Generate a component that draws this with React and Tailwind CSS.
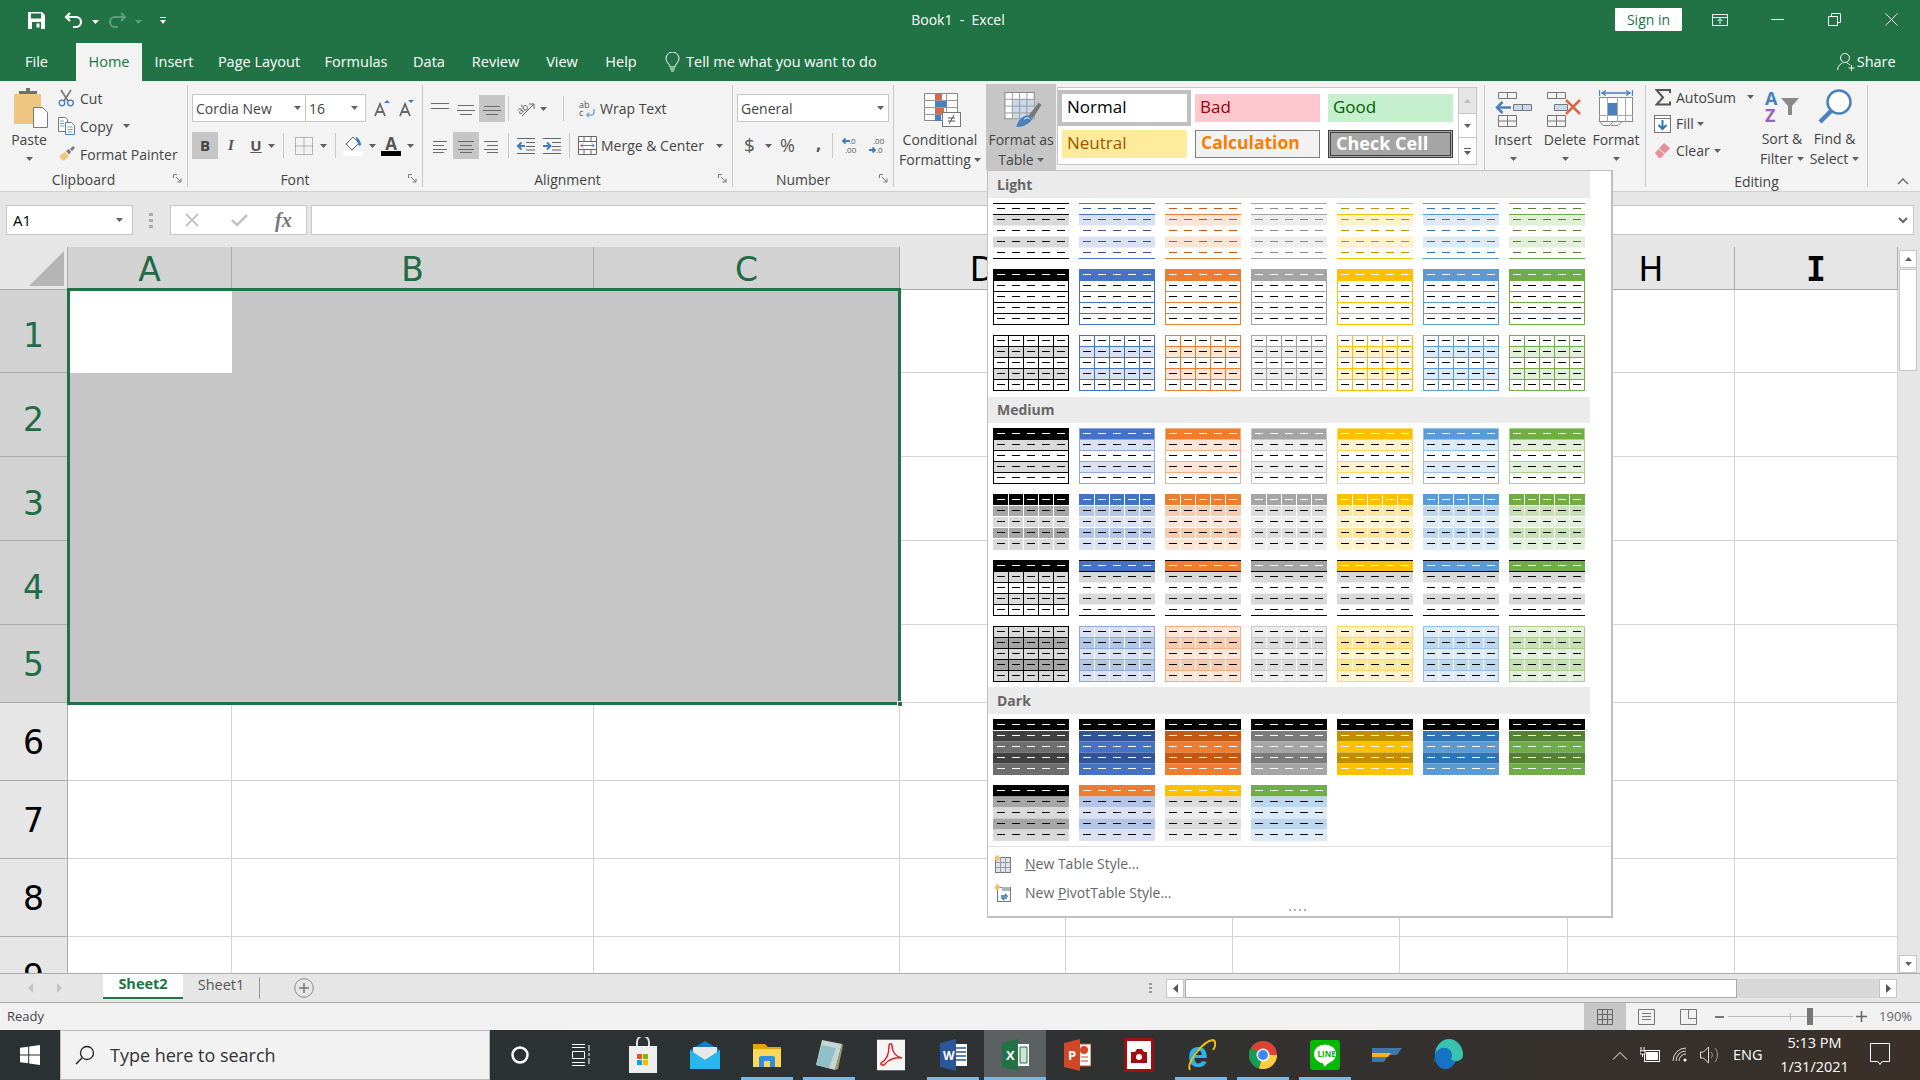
import React from "react";

const C = {
  black: { a: "#000000", t1: "#d9d9d9", t2: "#a6a6a6", t3: "#000000", d: "#000000", dk: "#404040", c: "#6e6e6e" },
  blue: { a: "#4472c4", t1: "#dae1f3", t2: "#b4c6e7", t3: "#8ea9db", d: "#305496", dk: "#305496", c: "#4472c4" },
  orange: { a: "#ed7d31", t1: "#fce4d6", t2: "#f8cbad", t3: "#f4b084", d: "#c65911", dk: "#c65911", c: "#ed7d31" },
  gray: { a: "#a5a5a5", t1: "#ededed", t2: "#dbdbdb", t3: "#c9c9c9", d: "#8a8a8a", dk: "#7b7b7b", c: "#a5a5a5" },
  yellow: { a: "#ffc000", t1: "#fff2cc", t2: "#ffe699", t3: "#ffd966", d: "#bf8f00", dk: "#bf8f00", c: "#ffc000" },
  ltblue: { a: "#5b9bd5", t1: "#ddebf7", t2: "#bdd7ee", t3: "#9bc2e6", d: "#2f75b5", dk: "#2f75b5", c: "#5b9bd5" },
  green: { a: "#70ad47", t1: "#e2efda", t2: "#c6e0b4", t3: "#a9d08e", d: "#548235", dk: "#548235", c: "#70ad47" },
};
const ORDER = ["black", "blue", "orange", "gray", "yellow", "ltblue", "green"];
const YS = [0, 11.5, 22.5, 33.5, 44.5, 56];
const W = "#ffffff";
const K = "#000000";

function Thumb({ bands, outer, h = [], hc, v, dash }) {
  return (
    <svg width="76" height="56" viewBox="0 0 76 56" className="block">
      {bands.map((b, i) => b && <rect key={i} x="0" y={YS[i]} width="76" height={YS[i + 1] - YS[i]} fill={b} />)}
      {v && [15.5, 30.5, 45.5, 60.5].map((x) => <line key={x} x1={x} x2={x} y1="0" y2="56" stroke={v} strokeWidth="1" />)}
      {h.map((y) => <line key={y} x1="0" x2="76" y1={y} y2={y} stroke={hc} strokeWidth="1" />)}
      {outer && <rect x="0.5" y="0.5" width="75" height="55" fill="none" stroke={outer} strokeWidth="1" />}
      {[5.5, 16.5, 27.5, 38.5, 49.5].map((y, i) =>
        [4, 19, 34, 49, 64].map((x) => <line key={x} x1={x} x2={x + 8} y1={y} y2={y} stroke={dash[i]} strokeWidth="1" />)
      )}
    </svg>
  );
}

const HL = [11.5, 22.5, 33.5, 44.5];
const first = (x) => [x, K, K, K, K];
const all = (x) => [x, x, x, x, x];
const LIGHT = [
  ORDER.map((n) => { const c = C[n]; return { bands: [null, c.t1, null, c.t1, null], h: [0.5, 11.5, 55.5], hc: c.a, dash: all(c.d) }; }),
  ORDER.map((n) => { const c = C[n]; return { bands: [c.a, null, null, null, null], outer: c.a, h: HL, hc: c.a, dash: first(W) }; }),
  ORDER.map((n) => { const c = C[n]; return { bands: [null, c.t1, null, c.t1, null], outer: c.a, h: HL, hc: c.a, v: c.a, dash: all(K) }; }),
];
const MEDIUM = [
  ORDER.map((n) => { const c = C[n]; return { bands: [c.a, c.t1, null, c.t1, null], outer: c.t3, h: HL, hc: c.t3, dash: first(W) }; }),
  ORDER.map((n) => { const c = C[n]; return { bands: [c.a, c.t2, c.t1, c.t2, c.t1], h: HL, hc: W, v: W, dash: first(W) }; }),
  ORDER.map((n) => {
    const c = C[n];
    if (n === "black") return { bands: [K, "#d9d9d9", null, "#d9d9d9", null], outer: K, h: HL, hc: K, v: K, dash: first(W) };
    return { bands: [c.a, "#d9d9d9", null, "#d9d9d9", null], h: [0.5, 11.5, 55.5], hc: K, dash: first(W) };
  }),
  ORDER.map((n) => {
    const c = C[n];
    if (n === "black") return { bands: [c.t1, c.t2, c.t1, c.t2, c.t1], outer: K, h: HL, hc: K, v: K, dash: all(K) };
    return { bands: [c.t1, c.t2, c.t1, c.t2, c.t1], outer: c.t3, h: HL, hc: c.t3, v: W, dash: all(K) };
  }),
];
const DARK = [
  ORDER.map((n) => { const c = C[n]; return { bands: [K, c.dk, c.c, c.dk, c.c], h: [11.5], hc: W, dash: all(W) }; }),
  [
    [K, "#a6a6a6", "#d9d9d9"],
    ["#ed7d31", "#b4c6e7", "#dae1f3"],
    ["#ffc000", "#dbdbdb", "#ededed"],
    ["#70ad47", "#bdd7ee", "#ddebf7"],
  ].map(([a, t2, t1]) => ({ bands: [a, t2, t1, t2, t1], dash: first(W) })),
];

function ThumbRows({ rows }) {
  return (
    <div className="pl-[5px] flex flex-col gap-[10px]">
      {rows.map((r, i) => (
        <div key={i} className="flex gap-[10px]">
          {r.map((s, j) => <Thumb key={j} {...s} />)}
        </div>
      ))}
    </div>
  );
}

const Head = ({ children, cls }) => (
  <div className={"w-[602px] bg-[#ebebeb] flex items-center pl-[9px] text-[14px] font-bold text-[#666666] " + cls}>{children}</div>
);

function Caret({ c = "#606060", w = 7 }) {
  return (
    <svg width={w} height="4" viewBox="0 0 7 4" className="block shrink-0"><path d="M0 0h7L3.5 4z" fill={c} /></svg>
  );
}

function Gallery() {
  return (
    <div className="absolute left-[987px] top-[170px] w-[626px] h-[748px] bg-white border border-[#c0c0c0] border-r-2 border-b-2 z-20">
      <Head cls="h-[27px]">Light</Head>
      <div className="mt-[5px]"><ThumbRows rows={LIGHT} /></div>
      <div className="mt-[6px]"><Head cls="h-[26px] pb-[2px]">Medium</Head></div>
      <div className="mt-[5px]"><ThumbRows rows={MEDIUM} /></div>
      <div className="mt-[5px]"><Head cls="h-[27px]">Dark</Head></div>
      <div className="mt-[5px]"><ThumbRows rows={DARK} /></div>
      <div className="mt-[5px] h-px bg-[#e1e1e1]" />
      <div className="flex items-center h-[29px] mt-[2px] pl-[6px] text-[14px] text-[#666666]">
        <NewTableIcon />
        <span className="ml-[13px]"><u>N</u>ew Table Style...</span>
      </div>
      <div className="flex items-center h-[29px] pl-[6px] text-[14px] text-[#666666]">
        <NewPivotIcon />
        <span className="ml-[13px]">New <u>P</u>ivotTable Style...</span>
      </div>
      <div className="flex justify-center gap-[3px] mt-[2px] -ml-[5px]">
        {[0, 1, 2, 3].map((i) => <div key={i} className="w-[2px] h-[2px] bg-[#b0b0b0]" />)}
      </div>
    </div>
  );
}

function NewTableIcon() {
  return (
    <svg width="18" height="20" viewBox="0 0 18 20" className="shrink-0">
      <rect x="1.5" y="3.5" width="15" height="15" fill="#dbe3ee" stroke="#777" />
      <path d="M1.5 8.5h15M1.5 13.5h15M6.5 3.5v15M11.5 3.5v15" stroke="#999" />
      <path d="M3 0l1 2 2-1-1 2 2 1-2 1 1 2-2-1-1 2-1-2-2 1 1-2-1-1 2-1-1-2 2 1z" fill="#efc57a" />
    </svg>
  );
}
function NewPivotIcon() {
  return (
    <svg width="18" height="20" viewBox="0 0 18 20" className="shrink-0">
      <rect x="3.5" y="4.5" width="13" height="14" fill="#fff" stroke="#777" />
      <rect x="8" y="4" width="8" height="4" fill="#aeb4bb" />
      <path d="M7 13h6l-2-2M13 15H8l2 2" stroke="#2f75b5" fill="none" strokeWidth="1.3" />
      <path d="M3 0l1 2 2-1-1 2 2 1-2 1 1 2-2-1-1 2-1-2-2 1 1-2-1-1 2-1-1-2 2 1z" fill="#efc57a" />
    </svg>
  );
}

/* ---------- title / tabs ---------- */
function TitleBar() {
  return (
    <div className="h-[43px] flex items-center text-white relative">
      <svg width="17" height="17" viewBox="0 0 17 17" className="ml-[28px] -mt-[3px]">
        <path fillRule="evenodd" d="M0 0h14l3 3v14H0zM3 1.5v5h10v-5zM4 10v7h9v-7zM8.5 11.5h3v4h-3z" fill="#fff" />
      </svg>
      <svg width="19" height="16" viewBox="0 0 19 16" className="ml-[19px] -mt-[3px]">
        <path d="M6 1 2 5l4 4M2.5 5H12a5 5 0 0 1 0 10H9" fill="none" stroke="#fff" strokeWidth="2.2" />
      </svg>
      <div className="ml-[9px]"><Caret c="#fff" w="7" /></div>
      <svg width="19" height="16" viewBox="0 0 19 16" className="ml-[9px] -mt-[3px]">
        <path d="M13 1l4 4-4 4M16.500 5H7a5 5 0 0 0 0 10h3" fill="none" stroke="#5f9d7c" strokeWidth="2.2" />
      </svg>
      <div className="ml-[8px]"><Caret c="#5f9d7c" w="7" /></div>
      <svg width="6" height="8" viewBox="0 0 6 8" className="ml-[18px] -mt-[2px]"><path d="M0 0h6v1H0zM0 3h6L3 7z" fill="#fff" /></svg>
      <div className="ml-[737px] -mt-[4px] w-[110px] text-center text-[14px] whitespace-pre">Book1  -  Excel</div>
      <div className="ml-[602px] -mt-[4px] w-[67px] h-[23px] bg-white rounded-[1px] text-[#217346] text-[14px] flex items-center justify-center">Sign in</div>
      <svg width="16" height="12" viewBox="0 0 16 12" className="ml-[30px] -mt-[4px]">
        <path d="M.5.5h15v11H.5zM.5 3.500h15M8 10V5M5.500 7 8 4.500 10.500 7" fill="none" stroke="#fff" />
      </svg>
      <div className="ml-[43px] -mt-[4px] w-[13px] h-px bg-white" />
      <svg width="13" height="13" viewBox="0 0 13 13" className="ml-[44px] -mt-[4px]">
        <path d="M.5 3.500h9v9h-9zM3.500 3V.5h9v9H10" fill="none" stroke="#fff" />
      </svg>
      <svg width="13" height="13" viewBox="0 0 13 13" className="ml-[44px] -mt-[4px]">
        <path d="M.5.500l12 12M12.500.500l-12 12" stroke="#fff" />
      </svg>
    </div>
  );
}

const TABS = [
  ["File", "w-[76px] pr-[3px]"],
  ["Home", "w-[66px]"],
  ["Insert", "w-[64px]"],
  ["Page Layout", "w-[106px]"],
  ["Formulas", "w-[88px]"],
  ["Data", "w-[58px]"],
  ["Review", "w-[75px]"],
  ["View", "w-[58px]"],
  ["Help", "w-[60px]"],
];
function TabRow() {
  return (
    <div className="h-[38px] flex items-center text-white text-[14.5px]">
      {TABS.map(([t, w]) => (
        <div key={t} className={w + " h-full flex items-center justify-center " + (t === "Home" ? "bg-[#f3f3f3] text-[#217346]" : "")}>{t}</div>
      ))}
      <svg width="15" height="20" viewBox="0 0 15 20" className="ml-[14px]">
        <path d="M5 15c0-3-4-4.500-4-8.500a6.500 6.500 0 0 1 13 0c0 4-4 5.500-4 8.500zM5 17h5M6 19h3" fill="none" stroke="#fff" />
      </svg>
      <span className="ml-[6px] text-[14.5px]">Tell me what you want to do</span>
      <svg width="19" height="20" viewBox="0 0 19 20" className="ml-[960px]">
        <circle cx="8" cy="6" r="4.500" fill="none" stroke="#fff" />
        <path d="M.5 18c0-4 3-6 5-7M10 11c1 .500 2 1 3 2M14.500 13v6M11.500 16h6" fill="none" stroke="#fff" />
      </svg>
      <span className="ml-[1px] text-[14.5px]">Share</span>
    </div>
  );
}

/* ---------- ribbon helpers ---------- */
function Launcher() {
  return (
    <svg width="9" height="9" viewBox="0 0 9 9">
      <path d="M.5 4V.5H4M3 3l4.500 4.500M8 4.500V8H4.500" fill="none" stroke="#777" />
    </svg>
  );
}
function Group({ w, label, launcher, children }) {
  return (
    <div className={w + " my-[4px] border-r border-[#c8c8c8] flex flex-col shrink-0"}>
      <div className="h-[85px]">{children}</div>
      <div className={"h-[16px] mt-[4px] relative flex items-center justify-center text-[14px] text-[#444444] " + (launcher ? "pr-[20px]" : "")}>
        {label}
        {launcher && <div className="absolute right-[5px] top-[3px]"><Launcher /></div>}
      </div>
    </div>
  );
}
function VSep({ cls }) {
  return <div className={"w-px h-[25px] bg-[#c8c8c8] " + cls} />;
}
function Lines({ ys, xs, c = "#6a6a6a", w = 18, h = 14 }) {
  return (
    <svg width={w} height={h} viewBox={`0 0 ${w} ${h}`} className="block">
      {ys.map((y, i) => <line key={i} x1={xs[i][0]} x2={xs[i][1]} y1={y} y2={y} stroke={c} />)}
    </svg>
  );
}

const BigLabel = ({ children }) => <div className="text-[14px] leading-[20px] text-[#444444] text-center whitespace-nowrap">{children}</div>;

function Clipboard() {
  return (
    <Group w="w-[188px]" label="Clipboard" launcher>
      <div className="flex">
        <div className="w-[58px] flex flex-col items-center">
          <svg width="36" height="40" viewBox="0 0 36 40" className="mt-[3px] ml-[3px]">
            <rect x="1" y="6" width="27" height="30" fill="#efc57f" />
            <path d="M6 6V3h7V0h4v3h7v3z" fill="#6f6f6f" />
            <path d="M20.500 19.500h9l5 5v15h-14z" fill="#fff" stroke="#7a7a7a" />
          </svg>
          <div className="mt-[2px]"><BigLabel>Paste</BigLabel></div>
          <div className="mt-[7px]"><Caret /></div>
        </div>
        <div className="flex flex-col gap-[2px] text-[14px] text-[#444444]">
          {[["Cut", <CutIcon />], ["Copy", <CopyIcon />], ["Format Painter", <PainterIcon />]].map(([t, ic]) => (
            <div key={t} className="h-[26px] flex items-center">
              <div className="w-[22px] flex">{ic}</div>
              <span>{t}</span>
              {t === "Copy" && <div className="ml-[10px]"><Caret /></div>}
            </div>
          ))}
        </div>
      </div>
    </Group>
  );
}
function CutIcon() {
  return (
    <svg width="17" height="18" viewBox="0 0 17 18">
      <path d="M3 1l7 11M13 1L6 12" stroke="#777" strokeWidth="1.600" />
      <circle cx="4" cy="14" r="2.800" fill="none" stroke="#3f7cc0" strokeWidth="1.300" />
      <circle cx="12.500" cy="14" r="2.800" fill="none" stroke="#3f7cc0" strokeWidth="1.300" />
    </svg>
  );
}
function CopyIcon() {
  return (
    <svg width="18" height="18" viewBox="0 0 18 18">
      <path d="M.5.5h7l2 2v12h-9z" fill="#fff" stroke="#777" />
      <path d="M7.500 5.500h6l3 3v9h-9z" fill="#fff" stroke="#4a80bd" />
      <path d="M2 4h4M2 6.500h4M2 9h4M9.500 10h5M9.500 12.500h5M9.500 15h5" stroke="#7a9cc3" />
    </svg>
  );
}
function PainterIcon() {
  return (
    <svg width="18" height="16" viewBox="0 0 18 16">
      <path d="M1 10l6-4 4 4-5 5c-1-1-2 0-5-5z" fill="#f0c47d" />
      <path d="M8 5l3-2 2 3-2 2.500zM12 3l3-3 2 2-3 3z" fill="#777" />
    </svg>
  );
}

function Font() {
  return (
    <Group w="w-[235px]" label="Font" launcher>
      <div className="flex items-center mt-[9px] ml-[4px] h-[28px]">
        <div className="w-[114px] h-[28px] bg-white border border-[#c6c6c6] flex items-center justify-between pl-[3px] pr-[4px] text-[14px] text-[#444444]">
          Cordia New<Caret />
        </div>
        <div className="w-[60px] h-[28px] bg-white border border-l-0 border-[#c6c6c6] flex items-center justify-between pl-[3px] pr-[7px] text-[14px] text-[#444444]">
          16<Caret />
        </div>
        <svg width="17" height="17" viewBox="0 0 17 17" className="ml-[8px]">
          <path d="M1 16L6 4l5 12M3 12h6" fill="none" stroke="#666" strokeWidth="1.800" />
          <path d="M10 3h6l-3-3z" fill="#3f7cc0" />
        </svg>
        <svg width="15" height="17" viewBox="0 0 15 17" className="ml-[8px]">
          <path d="M1 16L6 4l5 12M3 12h6" fill="none" stroke="#666" strokeWidth="1.800" />
          <path d="M9 0h6l-3 3z" fill="#3f7cc0" />
        </svg>
      </div>
      <div className="flex items-center mt-[10px] ml-[4px] h-[27px] text-[#555555]">
        <div className="w-[26px] h-[27px] bg-[#c6c6c6] flex items-center justify-center font-bold text-[15px] text-[#444444]">B</div>
        <div className="w-[26px] ml-[0px] text-center italic font-bold text-[15px] font-['Liberation_Serif',serif]">I</div>
        <div className="w-[24px] text-center font-bold text-[15px] underline">U</div>
        <Caret />
        <VSep cls="ml-[8px]" />
        <svg width="18" height="18" viewBox="0 0 18 18" className="ml-[11px]">
          <path d="M.5.5h17v17H.5zM9 .5v17M.5 9h17" fill="none" stroke="#777" strokeDasharray="1 1" />
        </svg>
        <div className="ml-[7px]"><Caret /></div>
        <VSep cls="ml-[8px]" />
        <div className="ml-[7px] w-[20px] flex flex-col items-center">
          <svg width="20" height="15" viewBox="0 0 20 15">
            <path d="M3 8l7-7 6 6-7 7z" fill="#fff" stroke="#666" />
            <path d="M13 1c3 1 5 5 5 8l-2 1-3-7z" fill="#3f7cc0" />
          </svg>
          <div className="w-[20px] h-[5px] bg-white" />
        </div>
        <div className="ml-[6px]"><Caret /></div>
        <div className="ml-[5px] w-[20px] flex flex-col items-center">
          <span className="font-bold text-[#555555] text-[17px] leading-[15px]">A</span>
          <div className="w-[20px] h-[5px] bg-black" />
        </div>
        <div className="ml-[6px]"><Caret /></div>
      </div>
    </Group>
  );
}

function Alignment() {
  return (
    <Group w="w-[310px]" label="Alignment" launcher>
      <div className="flex items-center mt-[10px] h-[27px]">
        <div className="ml-[8px]"><Lines ys={[1.500, 6.500]} xs={[[0, 18], [0, 18]]} /></div>
        <div className="ml-[8px]"><Lines ys={[3.500, 8.500, 12.500]} xs={[[1, 17], [0, 18], [3, 15]]} /></div>
        <div className="ml-[4px] w-[26px] h-[27px] bg-[#c6c6c6] flex items-center justify-center"><Lines ys={[4.500, 8.500, 12.500]} xs={[[1, 17], [0, 18], [3, 15]]} /></div>
        <VSep cls="ml-[3px]" />
        <svg width="20" height="19" viewBox="0 0 20 19" className="ml-[7px] overflow-visible">
          <text x="0" y="12" fontSize="10" fill="#666" transform="rotate(-35 8 8)">ab</text>
          <path d="M6 17L18 5M13 5h5v5" fill="none" stroke="#666" />
        </svg>
        <div className="ml-[4px]"><Caret /></div>
        <VSep cls="ml-[16px]" />
        <svg width="16" height="16" viewBox="0 0 16 16" className="ml-[15px] overflow-visible">
          <text x="0" y="7" fontSize="9" fill="#555">ab</text>
          <text x="0" y="15" fontSize="9" fill="#555">c</text>
          <path d="M15 8v4a2 2 0 0 1-2 2H8M10 11.500 7.500 14l2.500 2.500" fill="none" stroke="#3f7cc0" />
        </svg>
        <span className="ml-[5px] text-[14px] text-[#444444]">Wrap Text</span>
      </div>
      <div className="flex items-center mt-[10px] h-[27px]">
        <div className="ml-[10px]"><Lines ys={[2.500, 6.500, 10.500, 13.500]} xs={[[0, 14], [0, 11], [0, 14], [0, 11]]} w={14} /></div>
        <div className="ml-[6px] w-[26px] h-[27px] bg-[#c6c6c6] flex items-center justify-center"><Lines ys={[2.500, 6.500, 10.500, 13.500]} xs={[[0, 16], [2, 14], [0, 16], [2, 14]]} w={16} /></div>
        <div className="ml-[5px]"><Lines ys={[2.500, 6.500, 10.500, 13.500]} xs={[[0, 14], [3, 14], [0, 14], [3, 14]]} w={14} /></div>
        <VSep cls="ml-[10px]" />
        <IndentIcon flip cls="ml-[8px]" />
        <IndentIcon cls="ml-[8px]" />
        <VSep cls="ml-[8px]" />
        <svg width="19" height="19" viewBox="0 0 19 19" className="ml-[8px]">
          <path d="M.5.5h18v18H.5zM.5 5.500h18M.5 13.500h18M6 .5v5M13 .5v5M6 13.500v5M13 13.500v5" fill="#fff" stroke="#666" />
          <path d="M3 9.500h13M5 7.500l-2 2 2 2M14 7.500l2 2-2 2" fill="none" stroke="#3f7cc0" />
        </svg>
        <span className="ml-[4px] text-[14px] text-[#444444]">Merge &amp; Center</span>
        <div className="ml-[12px]"><Caret /></div>
      </div>
    </Group>
  );
}
function IndentIcon({ flip, cls }) {
  return (
    <svg width="18" height="16" viewBox="0 0 18 16" className={cls}>
      <path d="M0 .5h18M9 4.500h9M9 8.500h9M9 12h9M0 15.500h18" stroke="#666" />
      <path d={flip ? "M8 8H1M4.500 4.500 1 8l3.500 3.500" : "M0 8h7M4 4.500 7.500 8 4 11.500"} fill="none" stroke="#3f7cc0" strokeWidth="2" />
    </svg>
  );
}

function NumberG() {
  return (
    <Group w="w-[161px]" label="Number" launcher>
      <div className="mt-[9px] ml-[4px] w-[152px] h-[28px] bg-white border border-[#c6c6c6] flex items-center justify-between pl-[3px] pr-[4px] text-[14px] text-[#444444]">
        General<Caret />
      </div>
      <div className="flex items-center mt-[10px] h-[27px] text-[#555555]">
        <span className="ml-[11px] w-[12px] text-[19px]">$</span>
        <div className="ml-[9px]"><Caret /></div>
        <span className="ml-[8px] w-[17px] text-[18px]">%</span>
        <span className="ml-[19px] w-[6px] font-bold text-[18px] leading-none -mt-[6px]">,</span>
        <VSep cls="ml-[10px]" />
        <DecIcon cls="ml-[9px] overflow-visible" a=".0" b=".00" />
        <DecIcon cls="ml-[10px] overflow-visible" right a=".00" b=".0" />
      </div>
    </Group>
  );
}
function DecIcon({ cls, right, a, b }) {
  return (
    <svg width="17" height="17" viewBox="0 0 17 17" className={cls}>
      <text x={right ? 4 : 7} y="7" fontSize="8" fill="#555">{a}</text>
      <text x={right ? 7 : 3} y="16" fontSize="8" fill="#555">{b}</text>
      {right
        ? <path d="M0 13h6M3.500 10.500 6 13l-2.500 2.500" fill="none" stroke="#3f7cc0" strokeWidth="1.800" />
        : <path d="M8 4H1M3.500 1.500 1 4l2.500 2.500" fill="none" stroke="#3f7cc0" strokeWidth="1.800" />}
    </svg>
  );
}

function StyleCell({ cls, children }) {
  return <div className={"w-[125px] h-[28px] flex items-center pl-[5px] pb-[3px] leading-none " + cls}>{children}</div>;
}
function Styles() {
  return (
    <Group w="w-[591px]" label="">
      <div className="flex -mt-[1px]">
        <div className="w-[92px] flex flex-col items-center">
          <svg width="38" height="34" viewBox="0 0 38 34" className="mt-[9px] ml-[6px]">
            <path d="M.5.5h33v27H.5z" fill="#fff" stroke="#888" />
            <path d="M.5 7.500h33M.5 14.500h33M.5 21.500h33M11.500.5v27M22.500.5v27" stroke="#999" />
            <rect x="11" y="1" width="7" height="6" fill="#d9674a" />
            <rect x="11" y="8" width="12" height="6" fill="#4a80bd" />
            <rect x="11" y="15" width="9" height="6" fill="#d9674a" />
            <rect x="11" y="22" width="6" height="6" fill="#4a80bd" />
            <rect x="18.500" y="19.500" width="18" height="14" fill="#fff" stroke="#777" />
            <path d="M24 28h7M24 25h7M30 22l-5 9" stroke="#555" />
          </svg>
          <div className="mt-[3px]"><BigLabel>Conditional</BigLabel></div>
          <div className="flex items-center gap-[3px]"><BigLabel>Formatting</BigLabel><Caret /></div>
        </div>
        <div className="w-[70px] h-[86px] bg-[#c6c6c6] flex flex-col items-center">
          <svg width="38" height="37" viewBox="0 0 38 37" className="mt-[8px] ml-[3px]">
            <rect x=".5" y=".5" width="30" height="27" fill="#fff" stroke="#888" />
            <rect x="8" y="7" width="22" height="20" fill="#c9d9ec" />
            <path d="M.5 7.500h30M.5 14.500h30M.5 21.500h30M8 .5v27M15.500 .5v27M23 .5v27" stroke="#999" />
            <path d="M25 24l10-13 3 2-9 14z" fill="#777" />
            <path d="M12 36c2-8 7-12 13-12 3 1 4 4 2 6-4 4-9 6-15 6z" fill="#4a80bd" />
            <path d="M20 28c2-2 5-2 6 0" fill="none" stroke="#fff" />
          </svg>
          <div className="mt-[2px]"><BigLabel>Format as</BigLabel></div>
          <div className="flex items-center gap-[3px]"><BigLabel>Table</BigLabel><Caret /></div>
        </div>
        <div className="mt-[3px] ml-px w-[402px] h-[78px] bg-white border border-[#c6c6c6] shrink-0 grid grid-cols-[125px_125px_125px] content-start gap-x-[8px] gap-y-[8px] pl-[4px] pt-[6px]">
          <div className="relative">
            <div className="absolute -inset-[4px] border-[4px] border-[#c0c0c0]" />
            <StyleCell cls="bg-white text-black text-[17px]">Normal</StyleCell>
          </div>
          <StyleCell cls="bg-[#ffc7ce] text-[#9c0006] text-[17px]">Bad</StyleCell>
          <StyleCell cls="bg-[#c6efce] text-[#006100] text-[17px]">Good</StyleCell>
          <StyleCell cls="bg-[#ffeb9c] text-[#9c5700] text-[17px]">Neutral</StyleCell>
          <StyleCell cls="bg-[#f2f2f2] text-[#fa7d00] font-bold text-[17.5px] border border-[#7f7f7f]">Calculation</StyleCell>
          <StyleCell cls="bg-[#a5a5a5] text-white font-bold text-[18px] border-[3px] border-double border-[#3f3f3f] pl-[2px]">Check Cell</StyleCell>
        </div>
        <div className="mt-[3px] w-[18px] h-[78px] flex flex-col border border-l-0 border-[#c6c6c6] bg-white items-center">
          <div className="w-full h-[26px] bg-[#e6e6e6] border-b border-[#c6c6c6] flex items-center justify-center"><div className="rotate-180"><Caret c="#bbb" /></div></div>
          <div className="w-full h-[24px] border-b border-[#c6c6c6] flex items-center justify-center"><Caret /></div>
          <div className="h-[26px] flex flex-col items-center justify-center gap-[2px]"><div className="w-[7px] h-px bg-[#606060]" /><Caret /></div>
        </div>
      </div>
    </Group>
  );
}

function CellsG() {
  const items = [
    ["Insert", "w-[56px]", <InsertIcon />],
    ["Delete", "w-[48px]", <DeleteIcon />],
    ["Format", "w-[54px]", <FormatIcon />],
  ];
  return (
    <Group w="w-[161px]" label="">
      <div className="flex">
        {items.map(([t, w, ic]) => (
          <div key={t} className={w + " flex flex-col items-center"}>
            <div className="h-[42px] flex items-end pt-[3px]">{ic}</div>
            <div className="mt-[3px]"><BigLabel>{t}</BigLabel></div>
            <div className="mt-[7px]"><Caret /></div>
          </div>
        ))}
      </div>
    </Group>
  );
}
function InsertIcon() {
  return (
    <svg width="37" height="35" viewBox="0 0 37 35">
      <path d="M3.500.5h18v6h-18zM12.500.5v6M3.500 23.500h18v11h-18zM3.500 29h18M12.500 23.500v11" fill="none" stroke="#777" />
      <path d="M18.500 12.500h18v6h-18z" fill="#c9d9ec" stroke="#777" />
      <path d="M27.500 12.500v6" stroke="#777" />
      <path d="M16 15.500H2M7.500 10 2 15.500 7.500 21" fill="none" stroke="#4a80bd" strokeWidth="2.500" />
    </svg>
  );
}
function DeleteIcon() {
  return (
    <svg width="36" height="35" viewBox="0 0 36 35">
      <path d="M.5.500h18v6H.5zM9.500.500v6M.500 23.500h18v11H.5zM.5 29h18M9.500 23.500v11" fill="none" stroke="#777" />
      <path d="M7.500 12.500h13v6h-13z" fill="#c9d9ec" stroke="#777" />
      <path d="M19 8l14 14M33 8L19 22" stroke="#d9674a" strokeWidth="2.500" />
    </svg>
  );
}
function FormatIcon() {
  return (
    <svg width="34" height="37" viewBox="0 0 34 37">
      <path d="M.5 0v6M33.500 0v6M3 3h28M7 .5 3 3l4 2.500M27 .5 31 3l-4 2.500" fill="none" stroke="#4a80bd" strokeWidth="1.300" />
      <rect x=".5" y="7.500" width="33" height="24" fill="#fff" stroke="#888" />
      <path d="M.5 25.500h33M8.500 7.500v24M18.500 7.500v24M26.500 7.500v24" stroke="#aaa" />
      <rect x="9" y="13" width="9" height="12" fill="#4a80bd" />
      <path d="M1 31.500l3 4h7l3-4M12 35.500h7l4-4" fill="none" stroke="#888" />
    </svg>
  );
}

function Editing() {
  return (
    <Group w="w-[222px]" label="Editing">
      <div className="flex">
        <div className="w-[112px] flex flex-col text-[14px] text-[#444444]">
          <div className="h-[24px] flex items-center">
            <svg width="16" height="17" viewBox="0 0 16 17" className="ml-[9px] shrink-0"><path d="M15 4V1H1.500L8 8.500 1.500 15.500H15v-3" fill="none" stroke="#555" strokeWidth="2" /></svg>
            <span className="ml-[5px] whitespace-nowrap">AutoSum</span>
            <div className="ml-[11px]"><Caret /></div>
          </div>
          <div className="h-[27px] mt-[1px] flex items-center">
            <svg width="17" height="18" viewBox="0 0 17 18" className="ml-[8px]">
              <rect x=".5" y=".5" width="16" height="17" fill="#fff" stroke="#777" />
              <path d="M.5 3.500h16" stroke="#777" />
              <path d="M8.500 5v9M4.500 10l4 4 4-4" fill="none" stroke="#2f75b5" strokeWidth="2" />
            </svg>
            <span className="ml-[5px]">Fill</span>
            <div className="ml-[3px]"><Caret /></div>
          </div>
          <div className="h-[27px] flex items-center">
            <svg width="17" height="17" viewBox="0 0 17 17" className="ml-[8px]"><path d="M1 11l9-10 6 5-9 10H5z" fill="#ea8d9c" /><path d="M5 7l6 5" stroke="#fff" /></svg>
            <span className="ml-[5px]">Clear</span>
            <div className="ml-[4px]"><Caret /></div>
          </div>
        </div>
        <div className="w-[50px] -ml-[1px] flex flex-col items-center">
          <svg width="35" height="33" viewBox="0 0 35 33" className="mt-[5px] overflow-visible">
            <text x="0" y="15" fontSize="18" fontWeight="700" fill="#4a80bd">A</text>
            <text x="0" y="32" fontSize="18" fontWeight="700" fill="#9467bd">Z</text>
            <path d="M16 8h18l-7 8v9h-4v-9z" fill="#888" />
          </svg>
          <div className="mt-[6px]"><BigLabel>Sort &amp;</BigLabel></div>
          <div className="flex items-center gap-[4px]"><BigLabel>Filter</BigLabel><Caret /></div>
        </div>
        <div className="w-[53px] ml-[1px] flex flex-col items-center">
          <svg width="36" height="35" viewBox="0 0 36 35" className="mt-[4px]">
            <circle cx="22" cy="13" r="11.500" fill="#fff" stroke="#4a80bd" strokeWidth="2.500" />
            <path d="M14 22 3 33" stroke="#4a80bd" strokeWidth="4.500" />
          </svg>
          <div className="mt-[5px]"><BigLabel>Find &amp;</BigLabel></div>
          <div className="flex items-center gap-[4px]"><BigLabel>Select</BigLabel><Caret /></div>
        </div>
      </div>
    </Group>
  );
}

function Ribbon() {
  return (
    <div className="h-[111px] bg-[#f3f3f3] border-b border-[#d0d0d0] flex shrink-0">
      <Clipboard /><Font /><Alignment /><NumberG /><Styles /><CellsG /><Editing />
      <div className="flex-1 relative flex items-end justify-end pb-[6px] pr-[11px]">
        <svg width="12" height="7" viewBox="0 0 12 7"><path d="M1 6l5-5 5 5" fill="none" stroke="#666" strokeWidth="1.400" /></svg>
      </div>
    </div>
  );
}

function FormulaBar() {
  return (
    <div className="h-[55px] bg-[#e6e6e6] flex items-start pt-[13px] shrink-0">
      <div className="ml-[6px] w-[127px] h-[30px] bg-white border border-[#c6c6c6] flex items-center justify-between pl-[6px] pr-[9px] text-[15px] text-black">
        A1<Caret />
      </div>
      <div className="ml-[16px] mt-[8px] flex flex-col gap-[3px]">
        {[0, 1, 2].map((i) => <div key={i} className="w-[4px] h-[3px] bg-[#aaaaaa]" />)}
      </div>
      <div className="ml-[17px] w-[137px] h-[30px] bg-white border border-[#c6c6c6] flex items-center">
        <svg width="14" height="14" viewBox="0 0 14 14" className="ml-[14px]"><path d="M1 1l12 12M13 1L1 13" stroke="#c4c4c4" strokeWidth="1.800" /></svg>
        <svg width="17" height="14" viewBox="0 0 17 14" className="ml-[32px]"><path d="M1 7l5 5L16 2" fill="none" stroke="#c4c4c4" strokeWidth="2.500" /></svg>
        <span className="ml-[27px] italic font-['Liberation_Serif',serif] text-[20px] text-[#777777] font-bold">fx</span>
      </div>
      <div className="ml-[4px] w-[1603px] h-[30px] bg-white border border-[#c6c6c6] flex items-center justify-end pr-[5px]">
        <svg width="10" height="7" viewBox="0 0 10 7"><path d="M1 1l4 4 4-4" fill="none" stroke="#666" strokeWidth="2" /></svg>
      </div>
    </div>
  );
}

/* ---------- sheet ---------- */
const COLS = ["A", "B", "C", "D", "E", "F", "G", "H", "I"];
const ROW_H = ["h-[83px]", "h-[84px]", "h-[84px]", "h-[84px]", "h-[78px]", "h-[78px]", "h-[78px]", "h-[78px]", "h-[78px]"];

function Sheet() {
  return (
    <div className="flex-1 relative overflow-hidden bg-white font-['DejaVu_Sans',sans-serif]">
      <div className="grid grid-cols-[68px_164px_362px_306px_166px_167px_167px_168px_167px_163px]">
        <div className="h-[43px] bg-[#e6e6e6] border-r border-b border-[#ababab] flex items-end justify-end pr-[3px] pb-[3px]">
          <svg width="35" height="35" viewBox="0 0 35 35" className="block"><path d="M35 0v35H0z" fill="#b5b5b5" /></svg>
        </div>
        {COLS.map((c, i) => (
          <div key={c} className={"h-[43px] pt-[2px] border-r border-b border-[#ababab] flex items-center justify-center text-[33px] leading-none " + (i < 3 ? "bg-[#d2d2d2] text-[#1e6b45]" : "bg-[#e6e6e6] text-black") + (c === "I" ? " font-['DejaVu_Sans_Mono',monospace] font-bold" : "")}>
            {c}
          </div>
        ))}
        {ROW_H.map((h, r) => (
          <React.Fragment key={r}>
            <div className={h + " border-r border-b border-[#ababab] flex items-center justify-center text-[33px] leading-none " + (r < 5 ? "bg-[#d2d2d2] text-[#1e6b45]" : "bg-[#e6e6e6] text-black") + (r < 4 ? " pt-[9px]" : " pt-[2px]")}>
              {r + 1}
            </div>
            {COLS.map((c, i) => {
              const sel = r < 5 && i < 3;
              const a1 = r === 0 && i === 0;
              return <div key={c} className={h + (a1 ? " bg-white" : sel ? " bg-[#c6c6c6]" : " bg-white border-r border-b border-[#d4d4d4]")} />;
            })}
          </React.Fragment>
        ))}
      </div>
      <div className="absolute left-[67px] top-[41px] w-[834px] h-[417px] border-[3px] border-[#217346]" />
      <div className="absolute left-[897px] top-[454px] w-[6px] h-[6px] bg-[#217346] border border-white" />
    </div>
  );
}

function VScroll() {
  return (
    <div className="w-[22px] bg-[#e6e6e6] flex flex-col pl-px pt-[3px] shrink-0">
      <div className="w-[18px] h-[18px] bg-white border border-[#c6c6c6] flex items-center justify-center"><div className="rotate-180"><Caret /></div></div>
      <div className="w-[18px] h-[102px] bg-white border border-[#c6c6c6] mt-px" />
      <div className="flex-1" />
      <div className="w-[18px] h-[18px] bg-white border border-[#c6c6c6] flex items-center justify-center"><Caret /></div>
    </div>
  );
}

function SheetTabs() {
  return (
    <div className="h-[30px] bg-[#e6e6e6] border-t border-b border-[#ababab] flex items-center shrink-0 text-[14.5px]">
      <svg width="5" height="10" viewBox="0 0 5 10" className="ml-[28px]"><path d="M5 0v10L0 5z" fill="#c4c4c4" /></svg>
      <svg width="5" height="10" viewBox="0 0 5 10" className="ml-[24px]"><path d="M0 0v10l5-5z" fill="#c4c4c4" /></svg>
      <div className="ml-[41px] w-[80px] h-[25px] -mt-[3px] pb-[3px] bg-white border-b-[2px] border-[#217346] text-[#217346] font-bold flex items-center justify-center">Sheet2</div>
      <div className="w-[76px] h-[25px] -mt-[3px] pb-[3px] flex items-center justify-center text-[#555555]">Sheet1</div>
      <div className="w-px h-[22px] bg-[#999999]" />
      <svg width="20" height="20" viewBox="0 0 20 20" className="ml-[34px]">
        <circle cx="10" cy="10" r="9.300" fill="none" stroke="#888" />
        <path d="M10 5v10M5 10h10" stroke="#777" strokeWidth="1.500" />
      </svg>
      <div className="ml-[835px] flex flex-col gap-[2px]">
        {[0, 1, 2].map((i) => <div key={i} className="w-[3px] h-[2px] bg-[#999999]" />)}
      </div>
      <div className="ml-[14px] w-[18px] h-[19px] bg-white border border-[#c6c6c6] flex items-center justify-center">
        <svg width="5" height="9" viewBox="0 0 5 9"><path d="M5 0v9L0 4.500z" fill="#555" /></svg>
      </div>
      <div className="w-[695px] h-[19px] bg-[#d8d8d8] flex">
        <div className="w-[552px] ml-px bg-white border border-[#ababab]" />
      </div>
      <div className="w-[18px] h-[19px] bg-white border border-[#c6c6c6] flex items-center justify-center">
        <svg width="5" height="9" viewBox="0 0 5 9"><path d="M0 0v9l5-4.500z" fill="#555" /></svg>
      </div>
    </div>
  );
}

function StatusBar() {
  return (
    <div className="h-[27px] bg-[#f1f1f1] flex items-center text-[13px] text-[#444444] shrink-0">
      <span className="ml-[7px]">Ready</span>
      <div className="ml-[1540px] w-[42px] h-[27px] bg-[#c6c6c6] flex items-center justify-center">
        <svg width="16" height="16" viewBox="0 0 16 16"><path d="M.5.5h15v15H.5zM5.500.5v15M10.500 .5v15M.5 5.500h15M.5 10.500h15" fill="none" stroke="#666" /></svg>
      </div>
      <svg width="17" height="16" viewBox="0 0 17 16" className="ml-[12px]"><path d="M.5.5h16v15H.5z" fill="none" stroke="#777" /><path d="M4 4.500h9M4 7.500h9M4 10.500h9" stroke="#777" /></svg>
      <svg width="17" height="16" viewBox="0 0 17 16" className="ml-[25px]"><path d="M.5.5h16v15H.5zM8.500 .5v9H16" fill="none" stroke="#777" /></svg>
      <div className="ml-[18px] w-[9px] h-[2px] bg-[#777777]" />
      <div className="ml-[4px] w-[125px] h-px bg-[#bbbbbb] relative">
        <div className="absolute left-[62px] -top-[3px] w-px h-[7px] bg-[#bbbbbb]" />
        <div className="absolute left-[79px] -top-[8px] w-[6px] h-[17px] bg-[#777777]" />
      </div>
      <svg width="11" height="11" viewBox="0 0 11 11" className="ml-[3px]"><path d="M5.500 0v11M0 5.500h11" stroke="#666" strokeWidth="1.600" /></svg>
      <span className="ml-[12px] text-[13px] text-[#666666]">190%</span>
    </div>
  );
}

/* ---------- taskbar ---------- */
const TB = [
  { ic: <svg width="20" height="20" viewBox="0 0 20 20"><circle cx="10" cy="10" r="7.500" fill="none" stroke="#fff" strokeWidth="2.500" /></svg>, w: "w-[60px]" },
  { ic: <svg width="20" height="22" viewBox="0 0 20 22"><path d="M1 .5h13M1 3.500h13M1.500 7.500h12v7h-12zM1 18.500h13M1 21.500h13M18 1v6M18 9v3M18 14v6" fill="none" stroke="#fff" /></svg> },
  { ic: <svg width="30" height="36" viewBox="0 0 30 36"><path d="M9 9V5a6 6 0 0 1 12 0v4" fill="none" stroke="#ddd" strokeWidth="2" /><path d="M1 9h28v27H1z" fill="#efefef" /><rect x="9" y="17" width="5" height="5" fill="#f25022" /><rect x="15" y="17" width="5" height="5" fill="#7fba00" /><rect x="9" y="23" width="5" height="5" fill="#00a4ef" /><rect x="15" y="23" width="5" height="5" fill="#ffb900" /></svg> },
  { ic: <svg width="30" height="28" viewBox="0 0 30 28"><path d="M0 9 15 0l15 9v19H0z" fill="#0c7bd0" /><path d="M3 6h24v6L15 19 3 12z" fill="#e8e8e8" /><path d="M0 9l15 10L30 9v19H0z" fill="#27b6ee" /></svg> },
  { ic: <svg width="28" height="26" viewBox="0 0 28 26"><path d="M0 2h12l3 3h13v20H0z" fill="#e3a400" /><path d="M0 7h28v18H0z" fill="#fbd75b" /><path d="M6 25v-9a2 2 0 0 1 2-2h12a2 2 0 0 1 2 2v9h-5v-6h-6v6z" fill="#2f8fd8" /></svg>, ul: true },
  { ic: <svg width="28" height="32" viewBox="0 0 28 32"><path d="M7 1l20 4-7 26-19-5z" fill="#c4d6d4" /><path d="M1 26l6-20 14 3-7 20z" fill="#8fc0c8" /><path d="M27 5l-7 26 3-1 5-24z" fill="#a99b62" /></svg>, ul: true },
  { ic: <svg width="28" height="32" viewBox="0 0 28 32"><rect width="28" height="32" fill="#f5f5f5" /><path d="M0 0h28v1H0zM0 31h28v1H0z" fill="#666" /><path d="M4 24c6-3 8-10 8-17 0-3 3-3 3 0 0 6 4 11 10 12-6-1-13 1-17 6-1 2-5 1-4-1z" fill="none" stroke="#d8242c" strokeWidth="1.500" /></svg> },
  { ic: <svg width="27" height="32" viewBox="0 0 27 32"><path d="M10 5h17v22H10z" fill="#fff" /><path d="M13 9h13M13 13h13M13 17h13M13 21h13" stroke="#2b579a" strokeWidth="1.500" /><path d="M16 0v32L0 28V4z" fill="#2b579a" /><text x="3" y="21" fontSize="12" fontWeight="700" fill="#fff">W</text></svg>, ul: true },
  { ic: <svg width="27" height="32" viewBox="0 0 27 32"><path d="M10 5h17v22H10z" fill="#fff" /><path d="M18 8h7v16h-7z" fill="#cfe5d8" stroke="#217346" /><path d="M16 0v32L0 28V4z" fill="#217346" /><text x="4" y="21" fontSize="13" fontWeight="700" fill="#fff">X</text></svg>, ul: true, active: true },
  { ic: <svg width="27" height="32" viewBox="0 0 27 32"><path d="M10 5h17v22H10z" fill="#fff" stroke="#d24726" /><path d="M17 22h7M17 18h7" stroke="#d24726" /><circle cx="20" cy="11" r="4" fill="#d24726" /><path d="M16 0v32L0 28V4z" fill="#d24726" /><text x="4" y="21" fontSize="13" fontWeight="700" fill="#fff">P</text></svg> },
  { ic: <svg width="30" height="34" viewBox="0 0 30 34"><rect x="1.500" y="1.500" width="27" height="31" fill="#fff" stroke="#a10e0e" strokeWidth="3" /><path d="M7 14h4l2-3h5l2 3h3v11H7z" fill="#a10e0e" /><circle cx="15" cy="19" r="3" fill="#fff" /></svg> },
  { ic: <svg width="30" height="34" viewBox="0 0 30 34"><text x="2" y="29" fontSize="36" fontWeight="700" fontFamily="Liberation Sans" fill="#2ab4ea">e</text><path d="M4 32C0 25 17 3 27 2c3 1 3 6 0 10" fill="none" stroke="#efbd14" strokeWidth="2" /></svg>, ul: true },
  { ic: <svg width="28" height="32" viewBox="0 0 28 32"><circle cx="14" cy="16" r="14" fill="#db4437" /><path d="M14 16 2 9A14 14 0 0 0 10 29.500z" fill="#0f9d58" /><path d="M14 16h14A14 14 0 0 1 10 29.500z" fill="#ffcd40" /><circle cx="14" cy="16" r="6.500" fill="#fff" /><circle cx="14" cy="16" r="5" fill="#4285f4" /></svg>, ul: true },
  { ic: <svg width="30" height="30" viewBox="0 0 30 30"><rect width="30" height="30" rx="3" fill="#00b900" /><ellipse cx="15" cy="14" rx="11" ry="9.500" fill="#fff" /><path d="M13 22l1 5 6-5z" fill="#fff" /><text x="7.500" y="17" fontSize="8" fontWeight="700" fill="#00b900">LINE</text></svg>, ul: true },
  { ic: <svg width="30" height="14" viewBox="0 0 30 14"><path d="M0 0h30l-5 7H0z" fill="#3e78a8" /><path d="M0 5h19l-3 4H0z" fill="#f8b416" /><path d="M0 9h15l-3 5H0z" fill="#3e78a8" /></svg> },
  { ic: <svg width="30" height="34" viewBox="0 0 30 34"><path d="M1 17a14 16 0 0 1 28 0c0 4-3 6-7 6-5 0-6-2-4-5-7-5-17-2-17 5 0 1 0 2 0 2-1-2 0-5 0-8z" fill="#38c3b0" /><path d="M1 17c1-5 6-8 11-7 4 1 6 4 6 8-2 3-1 5 4 5-3 6-8 9-12 8-6-1-10-8-9-14z" fill="#1573c5" /></svg> },
];

function Taskbar() {
  return (
    <div className="h-[50px] bg-gradient-to-r from-[#2a3133] via-[#2e3233] to-[#3a3029] flex items-stretch shrink-0 text-white">
      <div className="w-[60px] flex items-center justify-center">
        <svg width="20" height="20" viewBox="0 0 20 20"><path d="M0 2.800 8.200 1.700v7.800H0zM9.200 1.500 20 0v9.500H9.200zM0 10.500h8.200v7.800L0 17.200zM9.200 10.500H20V20L9.200 18.500z" fill="#fff" /></svg>
      </div>
      <div className="w-[430px] bg-[#f2f2f2] border border-[#bbbbbb] flex items-center text-[#333333]">
        <svg width="20" height="20" viewBox="0 0 20 20" className="ml-[14px]"><circle cx="12" cy="8" r="6.500" fill="none" stroke="#222" strokeWidth="1.300" /><path d="M7 13l-6 6" stroke="#222" strokeWidth="1.500" /></svg>
        <span className="ml-[15px] text-[18px]">Type here to search</span>
      </div>
      {TB.map((t, i) => (
        <div key={i} className={(t.w || "w-[62px]") + " relative flex items-center justify-center " + (t.active ? "bg-[#5b6060]" : "")}>
          {t.ic}
          {t.ul && <div className={"absolute bottom-0 h-[3px] bg-[#76b9ed] " + (t.active ? "left-0 right-0" : "left-[5px] right-[5px]")} />}
        </div>
      ))}
      <svg width="16" height="9" viewBox="0 0 16 9" className="ml-[132px] self-center"><path d="M1 8.500l7-7 7 7" fill="none" stroke="#fff" /></svg>
      <svg width="20" height="16" viewBox="0 0 20 16" className="ml-[12px] self-center"><rect x="4.500" y="3.500" width="15" height="11" fill="none" stroke="#fff" /><rect x="6" y="5" width="12" height="8" fill="#fff" /><path d="M1 0v4M4 0v4M0 4h5v3H0zM2.500 7v3" stroke="#fff" /></svg>
      <svg width="16" height="16" viewBox="0 0 16 16" className="ml-[12px] self-center"><path d="M1 14a13 13 0 0 1 13-13M4 14a10 10 0 0 1 10-10M7 14a7 7 0 0 1 7-7" fill="none" stroke="#ddd" /><circle cx="13" cy="13" r="1.500" fill="#fff" /></svg>
      <svg width="20" height="18" viewBox="0 0 20 18" className="ml-[12px] self-center"><path d="M.5 6h3l5-5v16l-5-5h-3z" fill="none" stroke="#ddd" /><path d="M11 6a4 4 0 0 1 0 6M15 2a11 11 0 0 1 0 14" fill="none" stroke="#999" /></svg>
      <span className="ml-[13px] self-center text-[14.5px]">ENG</span>
      <div className="ml-[16px] w-[72px] self-center flex flex-col items-center text-[14.5px] leading-[24px]">
        <span>5:13 PM</span>
        <span>1/31/2021</span>
      </div>
      <svg width="20" height="24" viewBox="0 0 20 24" className="ml-[19px] self-center"><path d="M.5.5h19v18H12l-2 3-2-3H.5z" fill="none" stroke="#fff" /></svg>
    </div>
  );
}

export default function App() {
  return (
    <div className="w-[1920px] h-[1080px] relative overflow-hidden flex flex-col font-['Open_Sans',sans-serif] bg-white">
      <div className="bg-[#217346] shrink-0">
        <TitleBar />
        <TabRow />
      </div>
      <Ribbon />
      <FormulaBar />
      <div className="flex-1 min-h-0 flex">
        <Sheet />
        <VScroll />
      </div>
      <SheetTabs />
      <StatusBar />
      <Taskbar />
      <Gallery />
    </div>
  );
}
